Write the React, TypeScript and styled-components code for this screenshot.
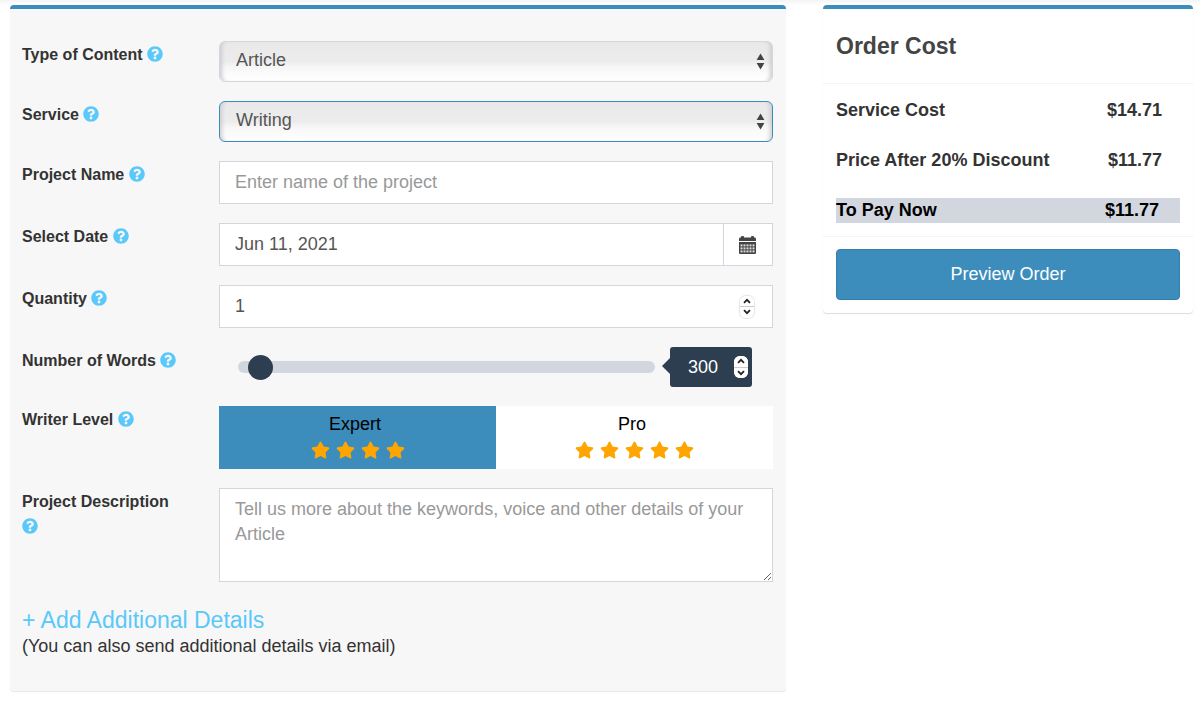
import React, { useState } from "react";
import styled, { createGlobalStyle } from "styled-components";
import { FaQuestionCircle, FaStar } from "react-icons/fa";

const color = {
  blue: "#3c8dbc",
  sky: "#5ac8fa",
  navy: "#2c3e50",
  line: "#d2d6de",
  panel: "#f7f7f7",
  text: "#333",
  muted: "#555",
  placeholder: "#999",
  star: "#ffa500",
};

const GlobalStyle = createGlobalStyle`
  *, *::before, *::after { box-sizing: border-box; }
  body {
    margin: 0;
    background: #fff;
    color: ${color.text};
    font: 18px/25px "Liberation Sans", Arial, Helvetica, sans-serif;
  }
  button, input, select, textarea { font: inherit; color: inherit; margin: 0; }
`;

const Page = styled.main`
  display: grid;
  grid-template-columns: minmax(0, 776fr) minmax(0, 370fr);
  column-gap: 37px;
  align-items: start;
  padding: 5px 7px 12px 10px;
  background: linear-gradient(#f4f4f4, #fff 5px);
`;

const OrderForm = styled.form`
  display: flex;
  flex-direction: column;
  gap: 19px;
  padding: 32px 13px 31px 12px;
  background: ${color.panel};
  border-top: 4px solid ${color.blue};
  border-radius: 4px;
  box-shadow: 0 1px 1px rgba(0, 0, 0, 0.1);
`;

const Row = styled.div`
  display: grid;
  grid-template-columns: 160px minmax(0, 1fr);
  column-gap: 37px;
  align-items: start;
`;

const Label = styled.label`
  padding-top: 1px;
  font-size: 16px;
  font-weight: bold;
`;

const HelpIcon = styled(FaQuestionCircle)`
  width: 16px;
  height: 16px;
  color: ${color.sky};
  vertical-align: -2px;
`;

const SelectWrap = styled.div`
  position: relative;
  display: flex;
`;

const Select = styled.select<{ $active?: boolean }>`
  appearance: none;
  flex: 1;
  height: 41px;
  padding: 0 32px 2px 16px;
  color: ${color.muted};
  border: 1px solid ${(p) => (p.$active ? color.blue : color.line)};
  border-radius: 6px;
  background: linear-gradient(#e9e9e9, #ececec 50%, #f7f7f7 65%, #fff);
  box-shadow: inset 5px 0 4px -3px #ccccd0, inset -5px 0 4px -3px #ccccd0;
  outline: none;
`;

const SelectArrows = styled.svg`
  position: absolute;
  right: 8px;
  top: 12px;
  width: 9px;
  height: 17px;
  fill: #444;
  pointer-events: none;
`;

const Box = styled.div`
  display: flex;
  align-items: center;
  height: 43px;
  background: #fff;
  border: 1px solid ${color.line};
`;

const TextInput = styled.input`
  flex: 1;
  min-width: 0;
  height: 41px;
  padding: 0 15px;
  color: ${color.muted};
  border: 0;
  background: transparent;
  outline: none;
  appearance: textfield;
  &::placeholder { color: ${color.placeholder}; opacity: 1; }
  &::-webkit-inner-spin-button { appearance: none; margin: 0; }
`;

const CalendarButton = styled.button`
  display: flex;
  align-items: center;
  justify-content: center;
  width: 49px;
  height: 41px;
  padding: 0 2px 0 0;
  border: 0;
  border-left: 1px solid ${color.line};
  background: #fff;
`;

const StepperBox = styled.span<{ $outlined?: boolean }>`
  display: flex;
  flex-direction: column;
  width: 14px;
  height: 22px;
  overflow: hidden;
  background: #fff;
  border-radius: 6px;
  box-shadow: ${(p) => (p.$outlined ? "0 0 1px 1px #e4e4e4" : "none")};
`;

const StepButton = styled.button`
  display: flex;
  flex: 1;
  align-items: center;
  justify-content: center;
  padding: 0;
  border: 0;
  background: #fff;
  & + & { border-top: 1px solid #ccc; }
`;

const QuantityBox = styled(Box)`
  padding-right: 18px;
`;

const SliderRow = styled.div`
  display: flex;
  align-items: center;
  gap: 15px;
  padding: 0 21px 0 19px;
`;

const Slider = styled.input`
  appearance: none;
  flex: 1;
  min-width: 0;
  height: 12px;
  margin: 0;
  border-radius: 6px;
  background: ${color.line};
  outline: none;
  &::-webkit-slider-thumb {
    appearance: none;
    width: 25px;
    height: 25px;
    border-radius: 50%;
    background: ${color.navy};
  }
`;

const WordCount = styled.div`
  position: relative;
  display: flex;
  align-items: center;
  width: 82px;
  height: 40px;
  padding-right: 4px;
  color: #fff;
  background: ${color.navy};
  border-radius: 3px;
  &::before {
    content: "";
    position: absolute;
    left: -8px;
    top: 11px;
    border: solid transparent;
    border-width: 8px 8px 8px 0;
    border-right-color: ${color.navy};
  }
`;

const WordInput = styled(TextInput)`
  height: 40px;
  padding: 0 0 0 18px;
  color: #fff;
`;

const Levels = styled.div`
  display: grid;
  grid-template-columns: 1fr 1fr;
`;

const Level = styled.label<{ $selected: boolean }>`
  display: flex;
  flex-direction: column;
  align-items: center;
  height: 63px;
  padding-top: 6px;
  color: #000;
  background: ${(p) => (p.$selected ? color.blue : "#fff")};
  cursor: pointer;
`;

const LevelRadio = styled.input`
  position: absolute;
  opacity: 0;
  pointer-events: none;
`;

const LevelName = styled.span`
  padding-right: 5px;
`;

const Stars = styled.span`
  display: flex;
  gap: 6px;
  padding-top: 4px;
  color: ${color.star};
  svg { width: 19px; height: 18px; }
`;

const Description = styled.textarea`
  display: block;
  width: 100%;
  height: 94px;
  padding: 8px 15px;
  color: ${color.muted};
  background: #fff;
  border: 1px solid ${color.line};
  border-radius: 0;
  outline: none;
  resize: vertical;
  &::placeholder { color: ${color.placeholder}; opacity: 1; }
`;

const Extra = styled.div`
  padding-top: 6px;
`;

const ExtraLink = styled.a`
  display: block;
  color: ${color.sky};
  font-size: 23px;
  line-height: 26px;
  text-decoration: none;
`;

const ExtraNote = styled.p`
  margin: 0;
  line-height: 27px;
`;

const CostCard = styled.aside`
  background: #fff;
  border-top: 4px solid ${color.blue};
  border-radius: 4px;
  box-shadow: 0 1px 1px rgba(0, 0, 0, 0.14);
`;

const CostTitle = styled.h2`
  margin: 0;
  padding: 25px 13px 24px;
  color: #444;
  font-size: 23px;
  line-height: 25px;
  border-bottom: 1px solid #f4f4f4;
`;

const CostList = styled.dl`
  display: flex;
  flex-direction: column;
  gap: 25px;
  margin: 0;
  padding: 14px 13px 13px;
  font-weight: bold;
`;

const CostLine = styled.div<{ $total?: boolean }>`
  display: flex;
  justify-content: space-between;
  padding-right: ${(p) => (p.$total ? "21px" : "18px")};
  color: ${(p) => (p.$total ? "#000" : color.text)};
  background: ${(p) => (p.$total ? color.line : "transparent")};
  dd { margin: 0; }
`;

const CostFooter = styled.div`
  padding: 12px 13px 13px;
  border-top: 1px solid #f4f4f4;
`;

const PreviewButton = styled.button`
  display: block;
  width: 100%;
  height: 51px;
  color: #fff;
  background: ${color.blue};
  border: 1px solid #367fa9;
  border-radius: 4px;
  cursor: pointer;
`;

function Help() {
  return <HelpIcon aria-hidden />;
}

function Arrows() {
  return (
    <SelectArrows viewBox="0 0 9 17" aria-hidden>
      <path d="M4.5 0.5 8.4 7H.6zM4.5 16.5.6 10h7.8z" />
    </SelectArrows>
  );
}

function Chevron({ down }: { down?: boolean }) {
  return (
    <svg width="8" height="6" viewBox="0 0 8 6" fill="none" stroke="#222" strokeWidth="1.8" aria-hidden>
      <path d={down ? "M1 1.2 4 4.2 7 1.2" : "M1 4.8 4 1.8 7 4.8"} />
    </svg>
  );
}

function Stepper({ outlined, name, onStep }: { outlined?: boolean; name: string; onStep: (d: number) => void }) {
  return (
    <StepperBox $outlined={outlined}>
      <StepButton type="button" aria-label={`Increase ${name}`} onClick={() => onStep(1)}>
        <Chevron />
      </StepButton>
      <StepButton type="button" aria-label={`Decrease ${name}`} onClick={() => onStep(-1)}>
        <Chevron down />
      </StepButton>
    </StepperBox>
  );
}

function CalendarIcon() {
  const cols = [0, 1, 2, 3, 4];
  const rows = [0, 1, 2];
  return (
    <svg width="17" height="18" viewBox="0 0 17 18" aria-hidden>
      <path
        fill="#444"
        d="M0 5V3a1.4 1.4 0 0 1 1.4-1.4H2V1a1 1 0 0 1 1-1h1a1 1 0 0 1 1 1v.6h7V1a1 1 0 0 1 1-1h1a1 1 0 0 1 1 1v.6h.6A1.4 1.4 0 0 1 17 3v2zM0 6h17v11a1 1 0 0 1-1 1H1a1 1 0 0 1-1-1z"
      />
      {rows.map((r) =>
        cols.map((c) => (
          <rect key={`${r}-${c}`} x={1.5 + c * 3} y={8.4 + r * 3} width="2" height="2" fill="#ddd" />
        ))
      )}
    </svg>
  );
}

const levels = [
  { name: "Expert", stars: 4 },
  { name: "Pro", stars: 5 },
];

const costs = [
  { label: "Service Cost", value: "$14.71" },
  { label: "Price After 20% Discount", value: "$11.77" },
  { label: "To Pay Now", value: "$11.77", total: true },
];

export default function App() {
  const [quantity, setQuantity] = useState(1);
  const [words, setWords] = useState(300);
  const [level, setLevel] = useState("Expert");

  return (
    <>
      <GlobalStyle />
      <Page>
        <OrderForm onSubmit={(e) => e.preventDefault()}>
          <Row>
            <Label htmlFor="type">Type of Content <Help /></Label>
            <SelectWrap>
              <Select id="type" defaultValue="Article">
                <option>Article</option>
              </Select>
              <Arrows />
            </SelectWrap>
          </Row>
          <Row>
            <Label htmlFor="service">Service <Help /></Label>
            <SelectWrap>
              <Select id="service" $active defaultValue="Writing">
                <option>Writing</option>
              </Select>
              <Arrows />
            </SelectWrap>
          </Row>
          <Row>
            <Label htmlFor="project">Project Name <Help /></Label>
            <Box>
              <TextInput id="project" type="text" placeholder="Enter name of the project" />
            </Box>
          </Row>
          <Row>
            <Label htmlFor="date">Select Date <Help /></Label>
            <Box>
              <TextInput id="date" type="text" defaultValue="Jun 11, 2021" />
              <CalendarButton type="button" aria-label="Open calendar">
                <CalendarIcon />
              </CalendarButton>
            </Box>
          </Row>
          <Row>
            <Label htmlFor="quantity">Quantity <Help /></Label>
            <QuantityBox>
              <TextInput
                id="quantity"
                type="number"
                min={1}
                value={quantity}
                onChange={(e) => setQuantity(Number(e.target.value))}
              />
              <Stepper outlined name="quantity" onStep={(d) => setQuantity(Math.max(1, quantity + d))} />
            </QuantityBox>
          </Row>
          <Row>
            <Label htmlFor="words">Number of Words <Help /></Label>
            <SliderRow>
              <Slider
                id="words"
                type="range"
                min={50}
                max={10050}
                step={10}
                value={words}
                onChange={(e) => setWords(Number(e.target.value))}
              />
              <WordCount>
                <WordInput
                  type="number"
                  aria-label="Word count"
                  value={words}
                  onChange={(e) => setWords(Number(e.target.value))}
                />
                <Stepper name="words" onStep={(d) => setWords(Math.max(50, words + d * 10))} />
              </WordCount>
            </SliderRow>
          </Row>
          <Row>
            <Label as="span" id="level-label">Writer Level <Help /></Label>
            <Levels role="radiogroup" aria-labelledby="level-label">
              {levels.map((l) => (
                <Level key={l.name} $selected={level === l.name}>
                  <LevelRadio
                    type="radio"
                    name="level"
                    checked={level === l.name}
                    onChange={() => setLevel(l.name)}
                  />
                  <LevelName>{l.name}</LevelName>
                  <Stars>
                    {Array.from({ length: l.stars }, (_, i) => (
                      <FaStar key={i} aria-hidden />
                    ))}
                  </Stars>
                </Level>
              ))}
            </Levels>
          </Row>
          <Row>
            <Label htmlFor="description">Project Description <Help /></Label>
            <Description
              id="description"
              placeholder="Tell us more about the keywords, voice and other details of your Article"
            />
          </Row>
          <Extra>
            <ExtraLink href="#details">+ Add Additional Details</ExtraLink>
            <ExtraNote>(You can also send additional details via email)</ExtraNote>
          </Extra>
        </OrderForm>

        <CostCard>
          <CostTitle>Order Cost</CostTitle>
          <CostList>
            {costs.map((c) => (
              <CostLine key={c.label} $total={c.total}>
                <dt>{c.label}</dt>
                <dd>{c.value}</dd>
              </CostLine>
            ))}
          </CostList>
          <CostFooter>
            <PreviewButton type="button">Preview Order</PreviewButton>
          </CostFooter>
        </CostCard>
      </Page>
    </>
  );
}
